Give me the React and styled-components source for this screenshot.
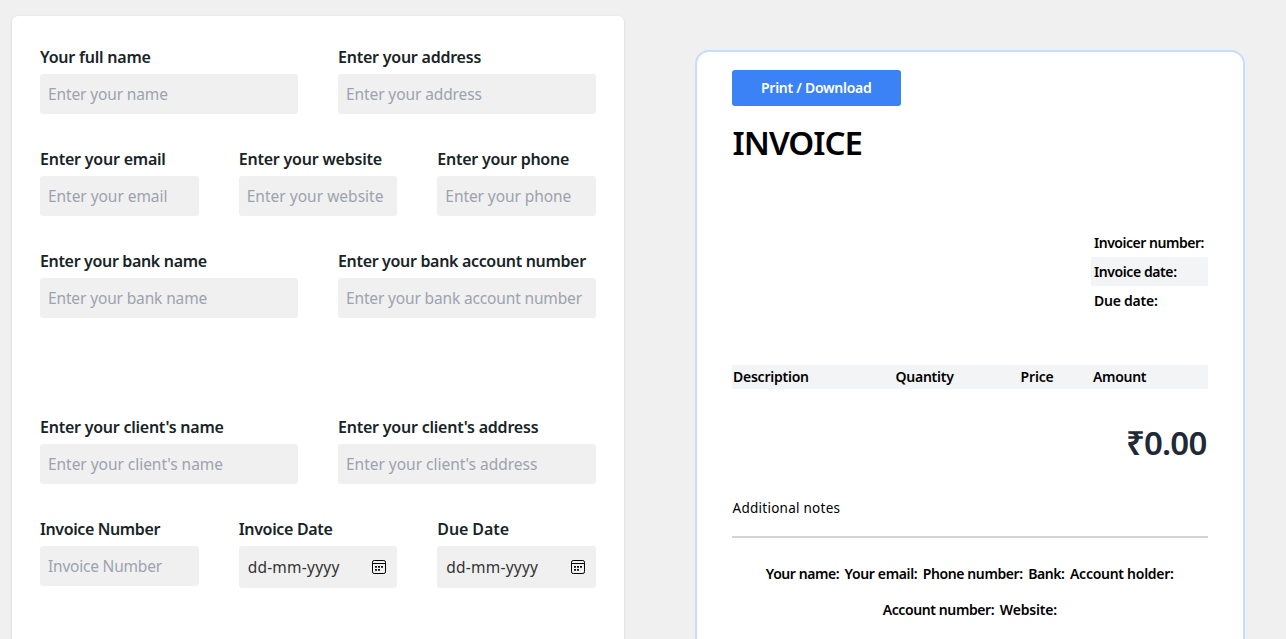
import React from 'react';
import styled, { createGlobalStyle } from 'styled-components';

const GlobalStyle = createGlobalStyle`
  *, *::before, *::after { box-sizing: border-box; }
  html, body { margin: 0; height: 100%; overflow: hidden; }
  body {
    background: #f0f0f0;
    color: #000;
    font-family: 'Noto Sans', 'Open Sans', sans-serif;
  }
`;

const Page = styled.main`
  display: flex;
  align-items: flex-start;
  height: 639px;
  padding: 16px 0 0 12px;
  overflow: hidden;
`;

const FormCard = styled.form`
  flex: none;
  width: 612px;
  height: 700px;
  padding: 29px 28px;
  background: #fff;
  border-radius: 6px;
  box-shadow: 0 1px 3px rgba(0, 0, 0, 0.12);
`;

const FieldRow = styled.div`
  display: grid;
  grid-template-columns: repeat(${(p) => p.$cols}, 1fr);
  align-items: start;
  gap: 40px;
  height: 69px;
  margin-bottom: ${(p) => p.$after || 33}px;
`;

const Field = styled.label`
  display: flex;
  flex-direction: column;
  gap: 5px;
  min-width: 0;
`;

const FieldLabel = styled.span`
  height: 24px;
  line-height: 24px;
  font-size: 16px;
  font-weight: 600;
  letter-spacing: ${(p) => p.$track - 0.05}px;
  color: #172426;
  white-space: nowrap;
`;

const Input = styled.input`
  width: 100%;
  height: 40px;
  padding: 0 8px;
  border: 0;
  border-radius: 3px;
  outline: 0;
  background: #f0f0f0;
  font: 400 15.5px/24px 'Noto Sans', 'Open Sans', sans-serif;
  letter-spacing: ${(p) => p.$track - 0.03}px;
  &::placeholder { color: #9ca3af; opacity: 1; }
`;

const DateBox = styled.span`
  display: flex;
  align-items: center;
  justify-content: space-between;
  height: 42px;
  padding: 0 10px 0 9px;
  border-radius: 3px;
  background: #f0f0f0;
  font-size: 15.5px;
  letter-spacing: 0.22px;
  color: #333;
`;

const CalendarIcon = () => (
  <svg width="16" height="16" viewBox="0 0 16 16" fill="none">
    <rect x="1.5" y="1.5" width="13" height="13" rx="1.7" stroke="#000" />
    <path d="M1.5 4.5h13" stroke="#000" />
    <path
      d="M4 7h2v1.7H4zM7 7h2v1.7H7zM10 7h2v1.7h-2zM4 10h2v1.7H4zM7 10h2v1.7H7z"
      fill="#111"
    />
  </svg>
);

const InvoiceCard = styled.section`
  flex: none;
  width: 550px;
  height: 700px;
  margin: 34px 0 0 71px;
  padding: 18px 35.5px 0 35px;
  background: #fff;
  border: 2px solid #c6defd;
  border-radius: 14px;
  display: flex;
  flex-direction: column;
`;

const PrintButton = styled.button`
  flex: none;
  align-self: flex-start;
  width: 168.5px;
  height: 36px;
  padding: 0;
  border: 0;
  border-radius: 3px;
  background: #3b82f6;
  color: #fff;
  font: 600 14px/20px 'Noto Sans', 'Open Sans', sans-serif;
  letter-spacing: -0.27px;
`;

const Title = styled.h1`
  margin: 17px 0 0;
  padding-left: 0.5px;
  height: 40px;
  font-size: 33px;
  font-weight: 600;
  line-height: 40px;
  letter-spacing: -1px;
`;

const MetaList = styled.ul`
  align-self: flex-end;
  width: 117px;
  margin: 66px 0 0;
  padding: 0;
  list-style: none;
`;

const MetaItem = styled.li`
  height: 29px;
  padding-left: 3.5px;
  line-height: 29px;
  font-size: 14px;
  font-weight: 600;
  letter-spacing: ${(p) => p.$track}px;
  white-space: nowrap;
  background: ${(p) => (p.$shaded ? '#f3f4f6' : 'transparent')};
  &:first-child { height: 28px; line-height: 27px; }
`;

const ItemsHeader = styled.div`
  display: grid;
  grid-template-columns: 162.5px 125px 72.5px 1fr;
  flex: none;
  height: 24px;
  margin-top: 50px;
  background: #f3f4f6;
`;

const ColumnName = styled.span`
  padding-left: 1px;
  font-size: 14px;
  font-weight: 600;
  line-height: 24px;
  letter-spacing: ${(p) => p.$track}px;
`;

const Total = styled.h2`
  align-self: flex-end;
  margin: 34px 0 0;
  padding-right: 1px;
  height: 40px;
  font-size: 33px;
  font-weight: 600;
  line-height: 40px;
  letter-spacing: -0.8px;
  color: #1f2937;
`;

const Notes = styled.p`
  margin: 33px 0 0;
  padding-left: 0.5px;
  height: 24px;
  font-size: 13.5px;
  line-height: 24px;
  letter-spacing: 0.26px;
`;

const Divider = styled.hr`
  width: 100%;
  height: 2px;
  margin: 16px 0 18px;
  border: 0;
  background: #d1d5db;
`;

const FooterLine = styled.div`
  display: flex;
  justify-content: center;
  gap: 5.5px;
  height: 36px;
`;

const FooterItem = styled.span`
  font-size: 14px;
  font-weight: 600;
  line-height: 36px;
  letter-spacing: ${(p) => p.$track - 0.04}px;
  white-space: nowrap;
`;

const formRows = [
  { fields: [
    ['Your full name', -0.16, 'Enter your name', -0.1],
    ['Enter your address', -0.18, 'Enter your address', -0.07],
  ] },
  { fields: [
    ['Enter your email', -0.17, 'Enter your email', -0.02],
    ['Enter your website', -0.15, 'Enter your website', 0.05],
    ['Enter your phone', -0.2, 'Enter your phone', -0.04],
  ] },
  { after: 97, fields: [
    ['Enter your bank name', -0.29, 'Enter your bank name', -0.11],
    ['Enter your bank account number', -0.28, 'Enter your bank account number', -0.12],
  ] },
  { fields: [
    ["Enter your client's name", -0.19, "Enter your client's name", -0.01],
    ["Enter your client's address", -0.17, "Enter your client's address", 0.01],
  ] },
  { fields: [
    ['Invoice Number', -0.34, 'Invoice Number', -0.18],
    ['Invoice Date', -0.27],
    ['Due Date', -0.05],
  ] },
];

const footerLines = [
  [['Your name:', -0.4], ['Your email:', -0.32], ['Phone number:', -0.36], ['Bank:', -0.4], ['Account holder:', -0.23]],
  [['Account number:', -0.35], ['Website:', -0.15]],
];

export default function App() {
  return (
    <>
      <GlobalStyle />
      <Page>
        <FormCard>
          {formRows.map((row, i) => (
            <FieldRow key={i} $cols={row.fields.length} $after={row.after}>
              {row.fields.map(([label, track, placeholder, inputTrack]) => (
                <Field key={label}>
                  <FieldLabel $track={track}>{label}</FieldLabel>
                  {placeholder ? (
                    <Input placeholder={placeholder} $track={inputTrack} />
                  ) : (
                    <DateBox>
                      dd-mm-yyyy
                      <CalendarIcon />
                    </DateBox>
                  )}
                </Field>
              ))}
            </FieldRow>
          ))}
        </FormCard>
        <InvoiceCard>
          <PrintButton type="button">Print / Download</PrintButton>
          <Title>INVOICE</Title>
          <MetaList>
            <MetaItem $track={-0.47}>Invoicer number:</MetaItem>
            <MetaItem $track={-0.41} $shaded>Invoice date:</MetaItem>
            <MetaItem $track={-0.23}>Due date:</MetaItem>
          </MetaList>
          <ItemsHeader>
            <ColumnName $track={-0.24}>Description</ColumnName>
            <ColumnName $track={-0.25}>Quantity</ColumnName>
            <ColumnName $track={-0.15}>Price</ColumnName>
            <ColumnName $track={-0.3}>Amount</ColumnName>
          </ItemsHeader>
          <Total>₹0.00</Total>
          <Notes>Additional notes</Notes>
          <Divider />
          {footerLines.map((line, i) => (
            <FooterLine key={i}>
              {line.map(([text, track]) => (
                <FooterItem key={text} $track={track}>{text}</FooterItem>
              ))}
            </FooterLine>
          ))}
        </InvoiceCard>
      </Page>
    </>
  );
}
